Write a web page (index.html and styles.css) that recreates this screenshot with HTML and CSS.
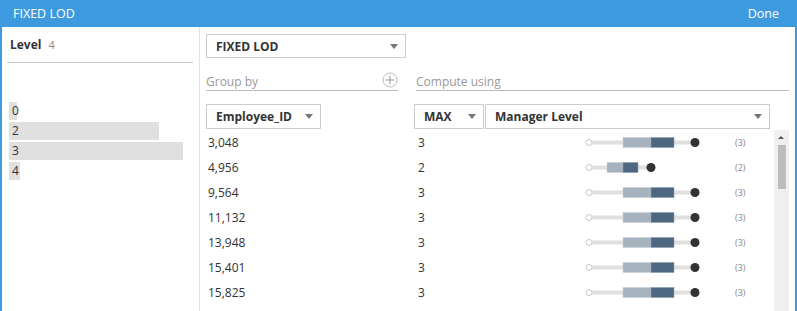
FILE: index.html
```html
<!DOCTYPE html>
<html lang="en">
<head>
  <meta charset="UTF-8">
  <link rel="stylesheet" href="styles.css">
  <title>FIXED LOD</title>
</head>
<body>
  <div class="frame">
    <div class="titlebar">
      <span>FIXED LOD</span>
      <span class="done">Done</span>
    </div>
    <div class="main">
      <div class="side">
        <div class="side-head">
          <b>Level</b><span class="count">4</span>
        </div>
        <div class="levels">
          <div class="level"><span class="bar" style="width:8px"></span><span class="lbl">0</span></div>
          <div class="level"><span class="bar" style="width:150px"></span><span class="lbl">2</span></div>
          <div class="level"><span class="bar" style="width:174px"></span><span class="lbl">3</span></div>
          <div class="level"><span class="bar" style="width:11px"></span><span class="lbl">4</span></div>
        </div>
      </div>
      <div class="editor">
        <div class="select type-select">FIXED LOD<i class="caret"></i></div>
        <div class="labels">
          <div class="label group-label">Group by
            <svg class="plus" width="16" height="16" viewBox="0 0 16 16">
              <circle cx="8" cy="8" r="7" fill="none" stroke="#bbb"/>
              <path d="M8 3.5v9M3.5 8h9" stroke="#999"/>
            </svg>
          </div>
          <div class="label compute-label">Compute using</div>
        </div>
        <div class="pickers">
          <div class="select emp-select">Employee_ID<i class="caret"></i></div>
          <div class="select agg-select">MAX<i class="caret"></i></div>
          <div class="select field-select">Manager Level<i class="caret"></i></div>
        </div>
        <div class="table-wrap">
          <div class="table">
            <div class="row"><span class="id">3,048</span><span class="val">3</span>
              <svg class="path" width="120" height="25"><rect x="4" y="10.5" width="106" height="4" fill="#e0e0e0"/><rect x="38" y="7.5" width="28" height="10" fill="#a6b3bf" stroke="#c8d0d8" stroke-width="0.5"/><rect x="66" y="7.5" width="23" height="10" fill="#4e6780" stroke="#8a9cae" stroke-width="0.5"/><circle cx="4" cy="12.5" r="3" fill="#fff" stroke="#c8c8c8"/><circle cx="110" cy="12.5" r="4.5" fill="#333"/></svg>
              <span class="num">(3)</span></div>
            <div class="row"><span class="id">4,956</span><span class="val">2</span>
              <svg class="path" width="120" height="25"><rect x="4" y="10.5" width="62" height="4" fill="#e0e0e0"/><rect x="22" y="7.5" width="16" height="10" fill="#a6b3bf" stroke="#c8d0d8" stroke-width="0.5"/><rect x="38" y="7.5" width="15" height="10" fill="#4e6780" stroke="#8a9cae" stroke-width="0.5"/><circle cx="4" cy="12.5" r="3" fill="#fff" stroke="#c8c8c8"/><circle cx="66" cy="12.5" r="4.5" fill="#333"/></svg>
              <span class="num">(2)</span></div>
            <div class="row"><span class="id">9,564</span><span class="val">3</span>
              <svg class="path" width="120" height="25"><rect x="4" y="10.5" width="106" height="4" fill="#e0e0e0"/><rect x="38" y="7.5" width="28" height="10" fill="#a6b3bf" stroke="#c8d0d8" stroke-width="0.5"/><rect x="66" y="7.5" width="23" height="10" fill="#4e6780" stroke="#8a9cae" stroke-width="0.5"/><circle cx="4" cy="12.5" r="3" fill="#fff" stroke="#c8c8c8"/><circle cx="110" cy="12.5" r="4.5" fill="#333"/></svg>
              <span class="num">(3)</span></div>
            <div class="row"><span class="id">11,132</span><span class="val">3</span>
              <svg class="path" width="120" height="25"><rect x="4" y="10.5" width="106" height="4" fill="#e0e0e0"/><rect x="38" y="7.5" width="28" height="10" fill="#a6b3bf" stroke="#c8d0d8" stroke-width="0.5"/><rect x="66" y="7.5" width="23" height="10" fill="#4e6780" stroke="#8a9cae" stroke-width="0.5"/><circle cx="4" cy="12.5" r="3" fill="#fff" stroke="#c8c8c8"/><circle cx="110" cy="12.5" r="4.5" fill="#333"/></svg>
              <span class="num">(3)</span></div>
            <div class="row"><span class="id">13,948</span><span class="val">3</span>
              <svg class="path" width="120" height="25"><rect x="4" y="10.5" width="106" height="4" fill="#e0e0e0"/><rect x="38" y="7.5" width="28" height="10" fill="#a6b3bf" stroke="#c8d0d8" stroke-width="0.5"/><rect x="66" y="7.5" width="23" height="10" fill="#4e6780" stroke="#8a9cae" stroke-width="0.5"/><circle cx="4" cy="12.5" r="3" fill="#fff" stroke="#c8c8c8"/><circle cx="110" cy="12.5" r="4.5" fill="#333"/></svg>
              <span class="num">(3)</span></div>
            <div class="row"><span class="id">15,401</span><span class="val">3</span>
              <svg class="path" width="120" height="25"><rect x="4" y="10.5" width="106" height="4" fill="#e0e0e0"/><rect x="38" y="7.5" width="28" height="10" fill="#a6b3bf" stroke="#c8d0d8" stroke-width="0.5"/><rect x="66" y="7.5" width="23" height="10" fill="#4e6780" stroke="#8a9cae" stroke-width="0.5"/><circle cx="4" cy="12.5" r="3" fill="#fff" stroke="#c8c8c8"/><circle cx="110" cy="12.5" r="4.5" fill="#333"/></svg>
              <span class="num">(3)</span></div>
            <div class="row"><span class="id">15,825</span><span class="val">3</span>
              <svg class="path" width="120" height="25"><rect x="4" y="10.5" width="106" height="4" fill="#e0e0e0"/><rect x="38" y="7.5" width="28" height="10" fill="#a6b3bf" stroke="#c8d0d8" stroke-width="0.5"/><rect x="66" y="7.5" width="23" height="10" fill="#4e6780" stroke="#8a9cae" stroke-width="0.5"/><circle cx="4" cy="12.5" r="3" fill="#fff" stroke="#c8c8c8"/><circle cx="110" cy="12.5" r="4.5" fill="#333"/></svg>
              <span class="num">(3)</span></div>
          </div>
          <div class="scrollbar">
            <i class="up"></i>
            <div class="thumb"></div>
          </div>
        </div>
      </div>
    </div>
  </div>
</body>
</html>
```

FILE: styles.css
```css
body {
  margin: 0;
  font-family: 'Open Sans', 'Liberation Sans', sans-serif;
  font-size: 12px;
  color: #333;
  background: #fff;
}

.frame {
  width: 797px;
  height: 311px;
  box-sizing: border-box;
  border-left: 2px solid #3d9ade;
  border-right: 2px solid #3d9ade;
  overflow: hidden;
}

.titlebar {
  height: 27px;
  margin: 0 -2px;
  background: #3d9ade;
  color: #fff;
  font-size: 12.5px;
  display: flex;
  align-items: center;
  justify-content: space-between;
  padding: 0 18px 0 13px;
}

.main {
  display: flex;
  height: 284px;
}

.side {
  width: 198px;
  border-right: 1px solid #e3e3e3;
  padding-left: 5px;
  box-sizing: border-box;
}

.side-head {
  width: 186px;
  height: 36px;
  box-sizing: border-box;
  border-bottom: 1px solid #c8c8c8;
  display: flex;
  align-items: center;
  padding-left: 3px;
}

.side-head b {
  font-weight: 700;
}

.count {
  color: #888;
  font-size: 11px;
  margin-left: 7px;
}

.levels {
  margin-top: 39px;
  padding-left: 2px;
}

.level {
  position: relative;
  height: 18px;
  margin-bottom: 2px;
  line-height: 18px;
}

.bar {
  position: absolute;
  left: 0;
  top: 0;
  height: 18px;
  background: #e0e0e0;
}

.lbl {
  position: relative;
  padding-left: 3px;
}

.editor {
  flex: 1;
  padding: 7px 6px 0 6px;
}

.select {
  position: relative;
  box-sizing: border-box;
  height: 24px;
  border: 1px solid #ccc;
  font-weight: 700;
  display: flex;
  align-items: center;
  padding-left: 9px;
}

.caret {
  position: absolute;
  right: 7px;
  top: 9px;
  border-left: 4px solid transparent;
  border-right: 4px solid transparent;
  border-top: 5px solid #777;
}

.type-select {
  width: 200px;
}

.labels {
  display: flex;
  gap: 18px;
  margin-top: 14px;
}

.label {
  height: 19px;
  box-sizing: border-box;
  border-bottom: 1px solid #bbb;
  color: #999;
  display: flex;
  align-items: center;
  justify-content: space-between;
}

.group-label {
  width: 192px;
}

.compute-label {
  flex: 1;
}

.plus {
  margin-top: -2px;
}

.pickers {
  display: flex;
  margin-top: 13px;
}

.pickers .select {
  height: 25px;
}

.emp-select {
  width: 115px;
  margin-right: 93px;
}

.agg-select {
  width: 70px;
}

.field-select {
  width: 285px;
  margin-left: 1px;
}

.table-wrap {
  display: flex;
  margin-top: 1px;
}

.table {
  width: 568px;
}

.row {
  display: grid;
  grid-template-columns: 208px 171px 120px 1fr;
  height: 25px;
  align-items: center;
}

.id {
  padding-left: 2px;
}

.val {
  padding-left: 4px;
}

.path {
  display: block;
}

.num {
  padding-left: 30px;
  font-size: 9px;
  color: #888;
}

.scrollbar {
  position: relative;
  width: 15px;
  height: 200px;
  background: #f0f0f0;
}

.up {
  position: absolute;
  left: 4px;
  top: 6px;
  border-left: 3px solid transparent;
  border-right: 3px solid transparent;
  border-bottom: 3px solid #555;
}

.thumb {
  position: absolute;
  left: 4px;
  top: 15px;
  width: 8px;
  height: 44px;
  background: #bdbdbd;
}
```
